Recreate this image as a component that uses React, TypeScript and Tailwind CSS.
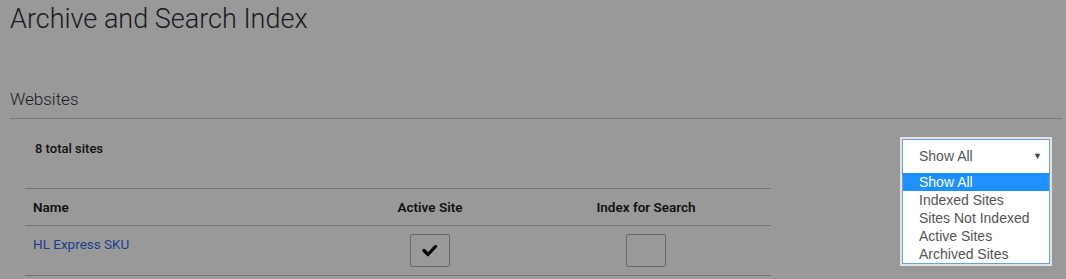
import React from 'react';

const options = ['Show All', 'Indexed Sites', 'Sites Not Indexed', 'Active Sites', 'Archived Sites'];

const CheckBox: React.FC<{ checked?: boolean }> = ({ checked }) => (
  <div className="w-[40px] h-[33px] border border-[#686868] rounded-[2px]">
    {checked && (
      <svg width="40" height="33" viewBox="0 0 40 33" className="-m-px">
        <path d="M14 16.5 L18 20.5 L25.5 12.5" fill="none" stroke="#000" strokeWidth="3.2" strokeLinecap="round" strokeLinejoin="round" />
      </svg>
    )}
  </div>
);

const App: React.FC = () => {
  return (
    <div className="w-[1066px] h-[279px] overflow-hidden bg-[#999999] text-[#1a1a24] font-['Roboto',sans-serif]">
      {/* Page title */}
      <h1 className="pl-[10px] pt-[3px] text-[27px] leading-[32px] font-light">Archive and Search Index</h1>

      {/* Section header */}
      <div className="ml-[10px] w-[1052px] mt-[53px] pb-[7px] border-b border-[#777777]">
        <h2 className="text-[17px] leading-[23px] font-light">Websites</h2>
      </div>

      {/* Count + filter */}
      <div className="flex items-start justify-between h-[69px] pt-[18px] pl-[35px] pr-[14px]">
        <p className="mt-[4px] text-[13px] leading-[16px] font-medium text-[#111]">8 total sites</p>

        <div className="w-[152px] border-2 border-[#e3e3e3] bg-white font-['Liberation_Sans',Arial,sans-serif] text-[14px] text-[#555]">
          <div className="h-[34px] border-x border-t border-[#6f9fd8] flex items-center justify-between pl-[16px] pr-[7px]">
            <span>Show All</span>
            <span className="text-[9px] text-[#444]">▼</span>
          </div>
          <ul className="border-x border-b border-[#6f9fd8]">
            {options.map((o, i) => (
              <li
                key={o}
                className={
                  i === 0
                    ? 'h-[18px] leading-[18px] pl-[16px] bg-[#1e90ff] text-white'
                    : 'h-[18px] leading-[18px] pl-[16px]'
                }
              >
                {o}
              </li>
            ))}
          </ul>
        </div>
      </div>

      {/* Sites table */}
      <div className="ml-[25px] w-[746px] border-t border-[#777777]">
        <div className="grid grid-cols-[305px_200px_232px_1fr] h-[37px] items-center border-b border-[#777777] text-[13.5px] font-semibold text-[#111]">
          <div className="pl-[8px]">Name</div>
          <div className="text-center">Active Site</div>
          <div className="text-center">Index for Search</div>
          <div />
        </div>
        <div className="grid grid-cols-[305px_200px_232px_1fr] h-[50px] border-b border-[#777777]">
          <div className="pl-[8px] pt-[10px] text-[13.5px] leading-[16px] text-[#1e3c8c]">HL Express SKU</div>
          <div className="flex justify-center pt-[8px]">
            <CheckBox checked />
          </div>
          <div className="flex justify-center pt-[8px]">
            <CheckBox />
          </div>
          <div />
        </div>
      </div>
    </div>
  );
};

export default App;
